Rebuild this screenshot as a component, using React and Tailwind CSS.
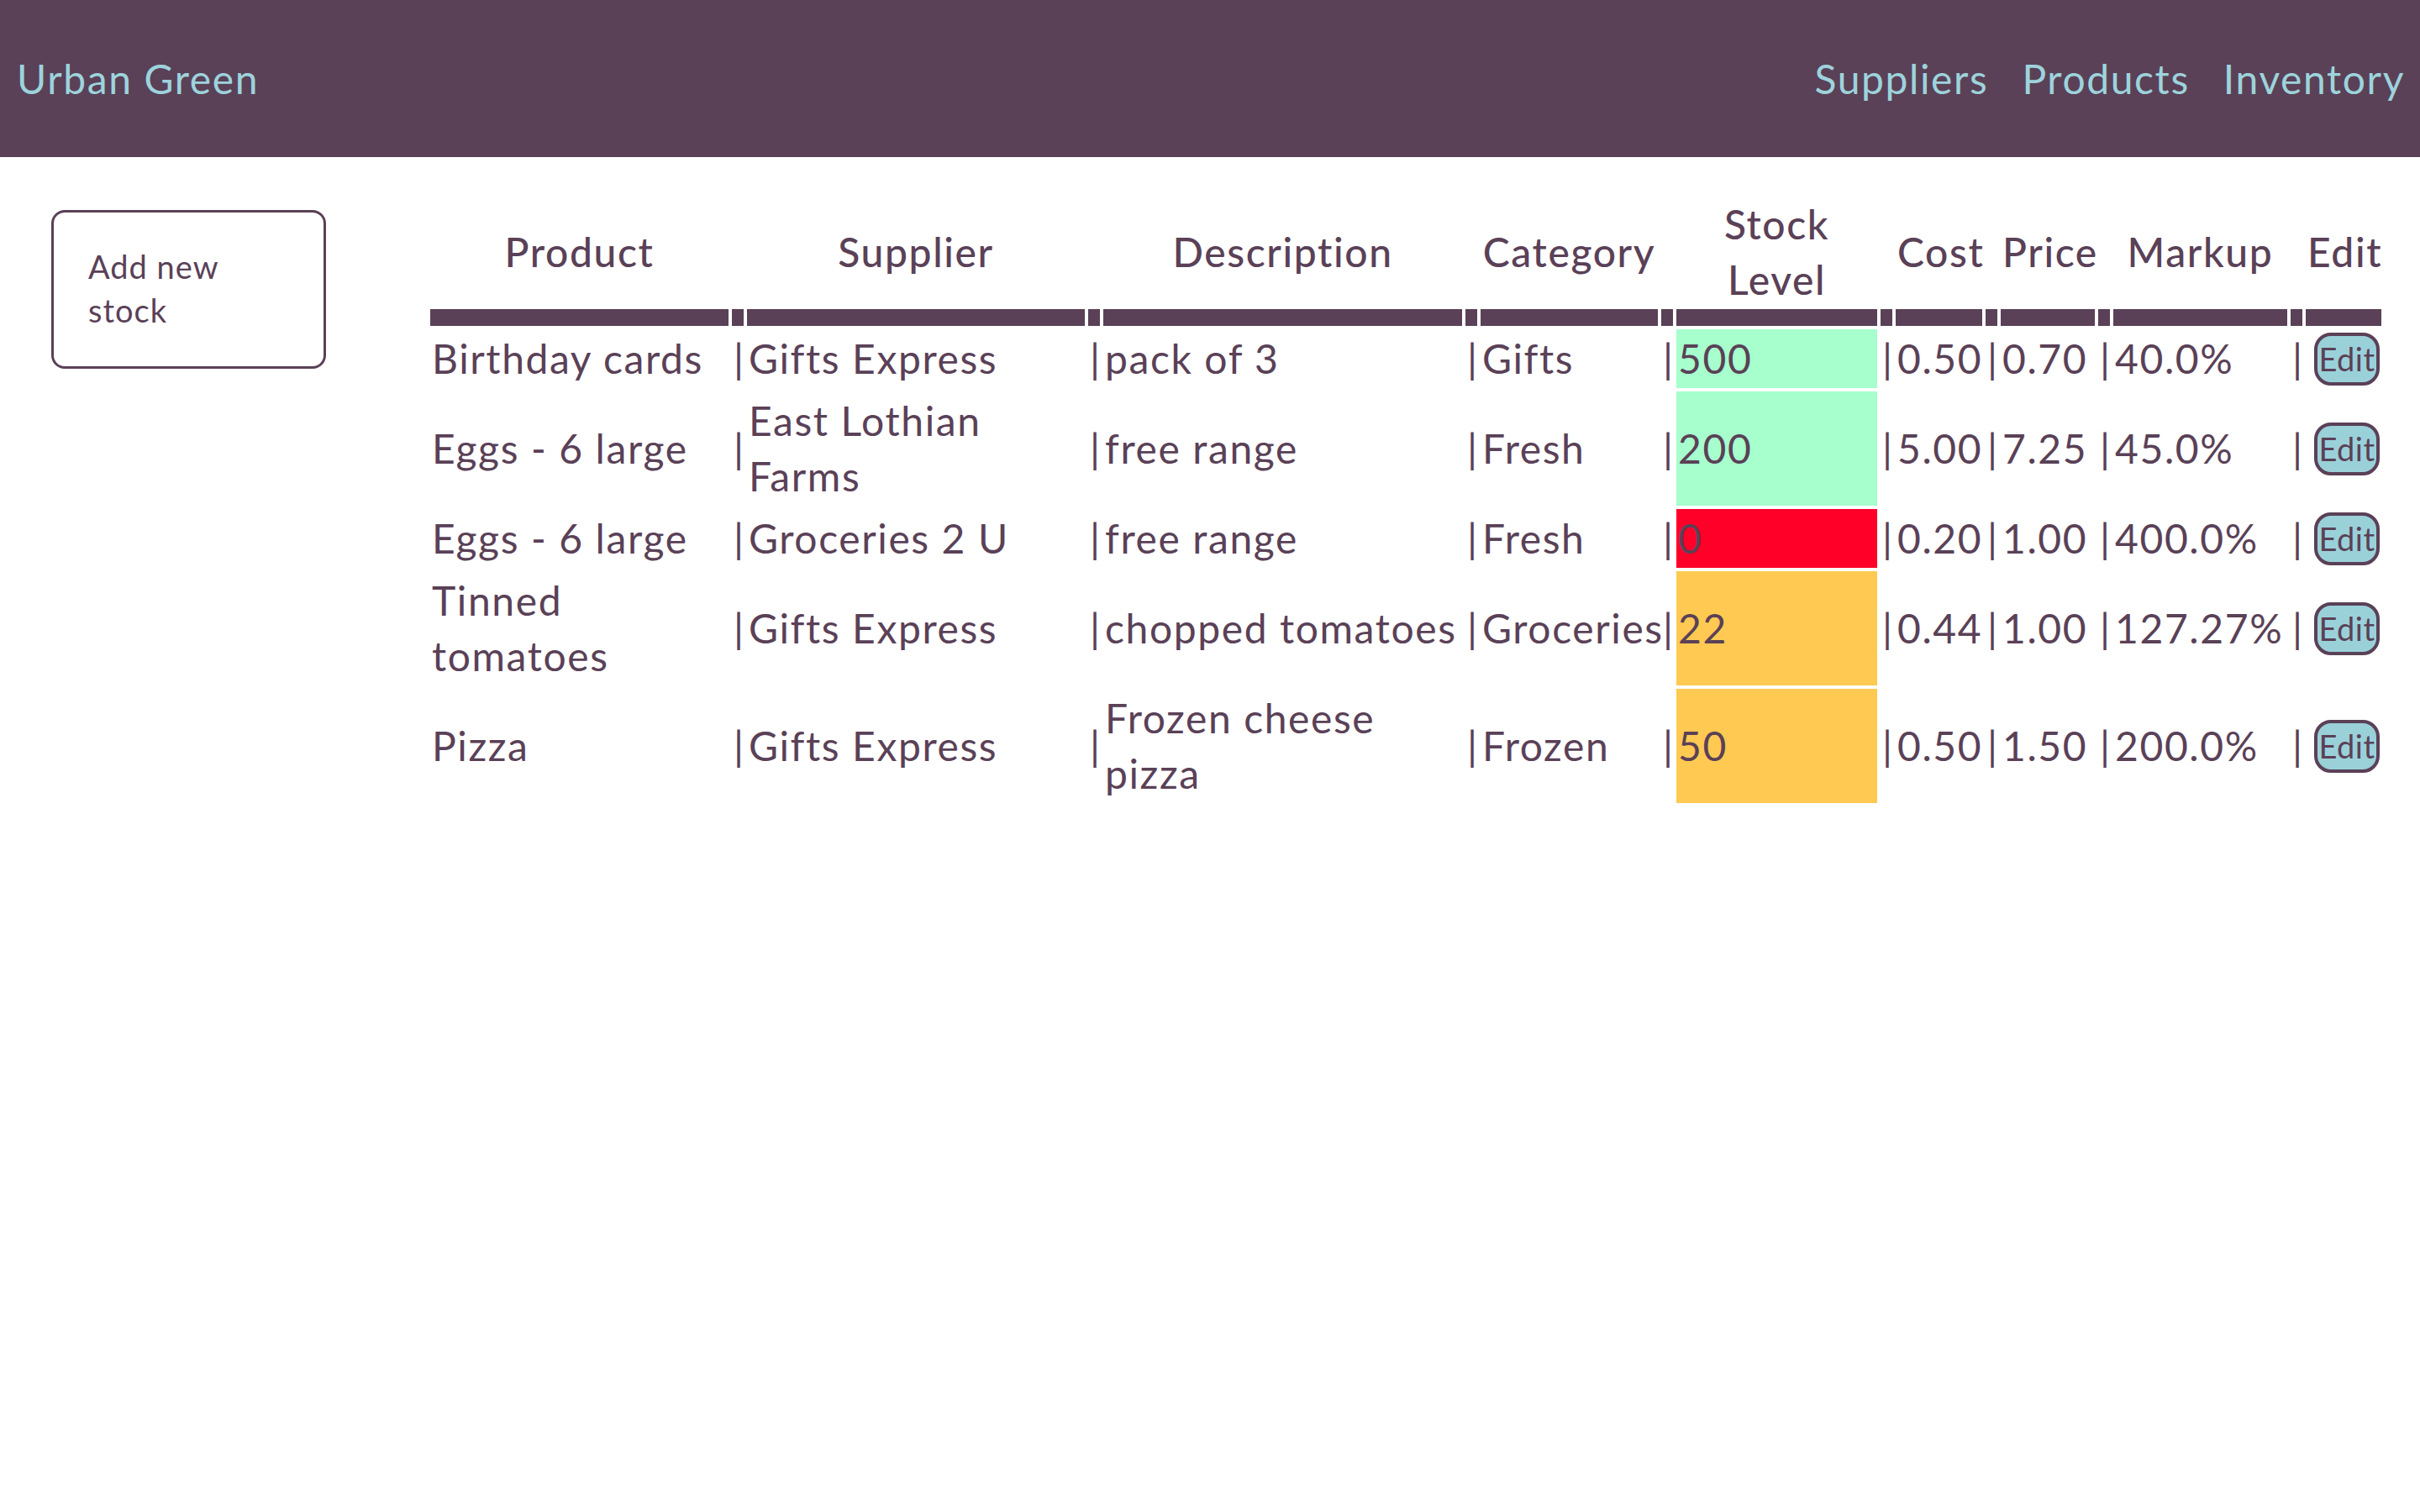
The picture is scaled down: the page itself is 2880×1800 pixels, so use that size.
import React from 'react';

const rows = [
  { product: 'Birthday cards', supplier: 'Gifts Express', description: 'pack of 3', category: 'Gifts', stock: 500, cost: '0.50', price: '0.70', markup: '40.0%' },
  { product: 'Eggs - 6 large', supplier: ['East Lothian', 'Farms'], description: 'free range', category: 'Fresh', stock: 200, cost: '5.00', price: '7.25', markup: '45.0%' },
  { product: 'Eggs - 6 large', supplier: 'Groceries 2 U', description: 'free range', category: 'Fresh', stock: 0, cost: '0.20', price: '1.00', markup: '400.0%' },
  { product: ['Tinned', 'tomatoes'], supplier: 'Gifts Express', description: 'chopped tomatoes', category: 'Groceries', stock: 22, cost: '0.44', price: '1.00', markup: '127.27%' },
  { product: 'Pizza', supplier: 'Gifts Express', description: ['Frozen cheese', 'pizza'], category: 'Frozen', stock: 50, cost: '0.50', price: '1.50', markup: '200.0%' },
];

const stockColor = (n) => {
  if (n <= 0) return 'bg-[#ff0028]';
  if (n < 100) return 'bg-[#ffc952]';
  return 'bg-[#a6ffcc]';
};

const Lines = ({ value }) =>
  Array.isArray(value) ? (
    <>
      {value[0]}
      <br />
      {value[1]}
    </>
  ) : (
    value
  );

const Sep = () => <td className="p-[2px] w-[14px] tracking-normal">|</td>;
const SepHead = () => <th className="p-[2px] w-[14px] border-b-[20px] border-[#5a4157]"></th>;

function Header({ children, width }) {
  return (
    <th className={`p-[2px] ${width} font-medium text-center border-b-[20px] border-[#5a4157]`}>
      {children}
    </th>
  );
}

export default function App() {
  return (
    <div className="min-h-screen bg-white text-[#5a4157] font-['Lato',sans-serif]">
      <nav className="h-[187px] bg-[#5a4157] flex items-center justify-between pl-[20px] pr-[18px] text-[48px] tracking-[1.6px] text-[#9dd3dc]">
        <a href="#">Urban Green</a>
        <div className="flex gap-[40px]">
          <a href="#">Suppliers</a>
          <a href="#">Products</a>
          <a href="#">Inventory</a>
        </div>
      </nav>

      <main className="flex items-start pt-[41px]">
        <button className="ml-[61px] mt-[22px] w-[327px] h-[189px] shrink-0 border-[3px] border-[#5a4157] rounded-[16px] flex items-center pl-[41px] pb-[4px] text-left text-[38px] leading-[52px] tracking-[1px] bg-white">
          <span>
            Add new
            <br />
            stock
          </span>
        </button>

        <table className="ml-[120px] w-[2330px] table-fixed border-separate border-spacing-[4px] text-[48px] leading-[66px] tracking-[1.6px] whitespace-nowrap">
          <thead>
            <tr>
              <Header width="w-[355px]">Product</Header>
              <SepHead />
              <Header width="w-[402px]">Supplier</Header>
              <SepHead />
              <Header width="w-[427px]">Description</Header>
              <SepHead />
              <Header width="w-[211px]">Category</Header>
              <SepHead />
              <Header width="w-[239px]">
                Stock
                <br />
                Level
              </Header>
              <SepHead />
              <Header width="w-[103px]">Cost</Header>
              <SepHead />
              <Header width="w-[112px]">Price</Header>
              <SepHead />
              <Header width="w-[207px]">Markup</Header>
              <SepHead />
              <Header width="w-[90px]">Edit</Header>
            </tr>
          </thead>
          <tbody>
            {rows.map((r, i) => (
              <tr key={i}>
                <td className="p-[2px]"><Lines value={r.product} /></td>
                <Sep />
                <td className="p-[2px]"><Lines value={r.supplier} /></td>
                <Sep />
                <td className="p-[2px]"><Lines value={r.description} /></td>
                <Sep />
                <td className="p-[2px]">{r.category}</td>
                <Sep />
                <td className={`p-[2px] ${stockColor(r.stock)}`}>{r.stock}</td>
                <Sep />
                <td className="p-[2px]">{r.cost}</td>
                <Sep />
                <td className="p-[2px]">{r.price}</td>
                <Sep />
                <td className="p-[2px]">{r.markup}</td>
                <Sep />
                <td className="p-[2px]">
                  <button className="block ml-[8px] w-[78px] h-[63px] px-0 border-[4px] border-[#5a4157] rounded-[20px] bg-[#9ad1d9] text-[38px] leading-[50px] tracking-[0.5px]">
                    Edit
                  </button>
                </td>
              </tr>
            ))}
          </tbody>
        </table>
      </main>
    </div>
  );
}
